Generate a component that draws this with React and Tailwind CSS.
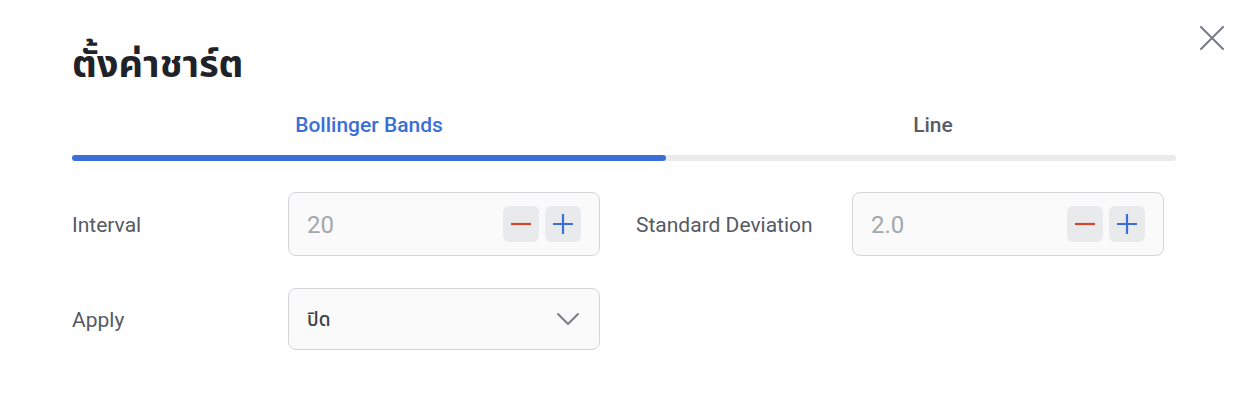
import React from "react";

function Stepper({ value }) {
  return (
    <div className="flex h-[64px] w-[312px] items-center rounded-[8px] border border-[#d4d6da] bg-[#fafafa] pl-[18px] pr-[18px]">
      <span className="flex-1 pt-[2px] text-[24px] text-[#a3a7ae]">{value}</span>
      <div className="flex gap-[6px]">
        <button className="flex h-[36px] w-[36px] items-center justify-center rounded-[6px] bg-[#e9eaec]">
          <svg width="22" height="22" viewBox="0 0 22 22" fill="none">
            <path d="M1 11h20" stroke="#d2462b" strokeWidth="2.2" />
          </svg>
        </button>
        <button className="flex h-[36px] w-[36px] items-center justify-center rounded-[6px] bg-[#e9eaec]">
          <svg width="22" height="22" viewBox="0 0 22 22" fill="none">
            <path d="M1 11h20M11 1v20" stroke="#3a6fd8" strokeWidth="2.2" />
          </svg>
        </button>
      </div>
    </div>
  );
}

export default function App() {
  return (
    <div
      className="relative h-[404px] w-[1250px] bg-white px-[72px] pt-[40px]"
      style={{ fontFamily: 'Roboto, "Noto Sans Thai", "Noto Sans", sans-serif' }}
    >
      <button className="absolute left-[1200px] top-[26px] h-[24px] w-[24px]">
        <svg width="24" height="24" viewBox="0 0 24 24" fill="none">
          <path d="M1 1l22 22M23 1L1 23" stroke="#787c86" strokeWidth="2" strokeLinecap="round" />
        </svg>
      </button>
      <div className="flex h-[52px] items-center pb-[4px] text-[38px] font-bold leading-none text-[#1f2329]">
        ตั้งค่าชาร์ต
      </div>
      <div className="mt-[14px] w-[1104px]">
        <div className="flex h-[38px] items-center pt-[2px] text-[21px] font-medium">
          <div className="flex w-[594px] justify-center text-[#3a6fd8]">Bollinger Bands</div>
          <div className="flex flex-1 justify-center pl-[24px] text-[#575c67]">Line</div>
        </div>
        <div className="mt-[11px] h-[6px] w-full rounded-full bg-[#ebebed]">
          <div className="h-full w-[594px] rounded-full bg-[#3a6fd8]" />
        </div>
      </div>
      <div className="mt-[31px] flex flex-col gap-[32px]">
        <div className="flex items-center">
          <div className="w-[216px] pt-[3px] text-[21px] text-[#555a65]">Interval</div>
          <Stepper value="20" />
          <div className="ml-[36px] w-[216px] pt-[3px] text-[21px] text-[#555a65]">Standard Deviation</div>
          <Stepper value="2.0" />
        </div>
        <div className="flex items-center">
          <div className="w-[216px] pt-[3px] text-[21px] text-[#555a65]">Apply</div>
          <div className="flex h-[62px] w-[312px] items-center rounded-[8px] border border-[#d4d6da] bg-[#fafafa] pl-[18px] pr-[20px]">
            <span className="flex-1 pt-[2px] text-[19px] font-medium text-[#3d4148]">ปิด</span>
            <svg width="22" height="22" viewBox="0 0 22 22" fill="none">
              <path d="M1 6l10 10 10-10" stroke="#787c86" strokeWidth="2" strokeLinecap="round" strokeLinejoin="round" />
            </svg>
          </div>
        </div>
      </div>
    </div>
  );
}
